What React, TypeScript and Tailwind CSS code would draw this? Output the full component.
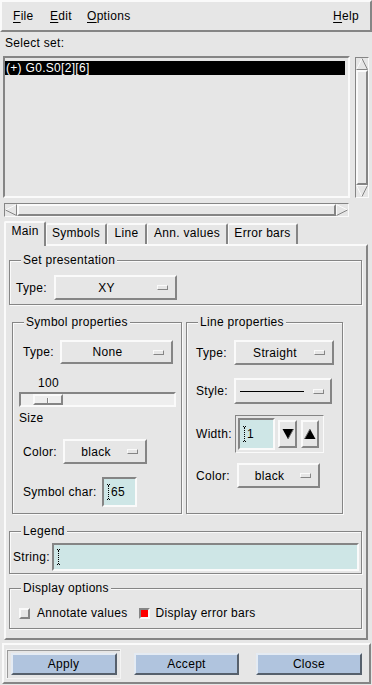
import React from "react";

const RAISED =
  "border-2 border-t-[#fafafa] border-l-[#fafafa] border-r-[#858585] border-b-[#858585]";
const RAISED1 =
  "border border-t-[#fafafa] border-l-[#fafafa] border-r-[#858585] border-b-[#858585]";
const SUNKEN =
  "border-2 border-t-[#858585] border-l-[#858585] border-r-[#fafafa] border-b-[#fafafa]";
const SUNKEN1 =
  "border border-t-[#858585] border-l-[#858585] border-r-[#fafafa] border-b-[#fafafa]";
const BTN =
  "border-2 border-t-[#e4ebf3] border-l-[#e4ebf3] border-r-[#56606c] border-b-[#56606c] bg-[#b0c4de] flex items-center justify-center shrink-0";

type P = { className?: string; children?: React.ReactNode };

function Frame({ title, className = "", children }: P & { title: string }) {
  return (
    <div
      className={`relative shrink-0 border border-[#858585] shadow-[inset_1px_1px_0_#fafafa,1px_1px_0_#fafafa] ${className}`}
    >
      <span className="absolute left-[11px] top-[-8px] bg-[#e6e6e6] px-[2px] leading-[14px] whitespace-nowrap">
        {title}
      </span>
      {children}
    </div>
  );
}

function Ind({ className = "" }: P) {
  return <div className={`w-[11px] h-[5px] shrink-0 ${RAISED1} ${className}`} />;
}

function OptMenu({ className = "", children }: P) {
  return (
    <div className={`${RAISED} flex items-center shrink-0 ${className}`}>
      <div className="flex-1 text-center leading-[14px] whitespace-nowrap">{children}</div>
      <Ind className="mr-[7px]" />
    </div>
  );
}

function Cursor() {
  const dots = [];
  for (let y = 2; y <= 13; y += 2) dots.push(<rect key={y} x="1" y={y} width="1" height="1" fill="#000" />);
  return (
    <svg width="3" height="16" viewBox="0 0 3 16" className="shrink-0">
      <rect x="0" y="0" width="1" height="1" fill="#000" />
      <rect x="2" y="0" width="1" height="1" fill="#000" />
      <rect x="1" y="1" width="1" height="1" fill="#000" />
      {dots}
      <rect x="1" y="14" width="1" height="1" fill="#000" />
      <rect x="0" y="15" width="1" height="1" fill="#000" />
      <rect x="2" y="15" width="1" height="1" fill="#000" />
    </svg>
  );
}

function Field({ className = "", text = "" }: P & { text?: string }) {
  return (
    <div className={`${SUNKEN} bg-[#cee6e6] flex items-center shrink-0 ${className}`}>
      <div className="ml-[3px] flex items-center">
        <Cursor />
        <span className="leading-[14px] ml-[1px]">{text}</span>
      </div>
    </div>
  );
}

type Dir = "up" | "down" | "left" | "right";
function Arrow({ dir }: { dir: Dir }) {
  const L = "#fafafa";
  const D = "#858585";
  const F = "#e6e6e6";
  let poly = "";
  let lines: [string, string][] = [];
  if (dir === "up") {
    poly = "6,0.5 11.5,11.5 0.5,11.5";
    lines = [["M0.5 11.5 L6 0.5", L], ["M6 0.5 L11.5 11.5", D], ["M0.5 11.5 L11.5 11.5", D]];
  } else if (dir === "down") {
    poly = "0.5,0.5 11.5,0.5 6,11.5";
    lines = [["M0.5 0.5 L11.5 0.5", L], ["M0.5 0.5 L6 11.5", L], ["M11.5 0.5 L6 11.5", D]];
  } else if (dir === "left") {
    poly = "0.5,6 11.5,0.5 11.5,11.5";
    lines = [["M0.5 6 L11.5 0.5", L], ["M11.5 0.5 L11.5 11.5", D], ["M11.5 11.5 L0.5 6", D]];
  } else {
    poly = "0.5,0.5 11.5,6 0.5,11.5";
    lines = [["M0.5 0.5 L0.5 11.5", L], ["M0.5 0.5 L11.5 6", L], ["M11.5 6 L0.5 11.5", D]];
  }
  return (
    <svg width="12" height="12" viewBox="0 0 12 12" className="shrink-0">
      <polygon points={poly} fill={F} />
      {lines.map(([d, c], i) => (
        <path key={i} d={d} stroke={c} strokeWidth="1" fill="none" />
      ))}
    </svg>
  );
}

function SpinArrow({ up }: { up?: boolean }) {
  return (
    <svg width="14" height="24" viewBox="0 0 14 24">
      {up ? (
        <>
          <polygon points="7,7 12.5,17 1.5,17" fill="#000" />
          <path d="M1.5 17 L7 7" stroke="#6a6a6a" strokeWidth="1" />
        </>
      ) : (
        <>
          <polygon points="1.5,7 12.5,7 7,17" fill="#000" />
          <path d="M12.5 7 L7 17" stroke="#6a6a6a" strokeWidth="1" />
        </>
      )}
    </svg>
  );
}

function Tab({ className = "", children }: P) {
  return (
    <div
      className={`h-[21px] shrink-0 border-l border-t-2 border-r-2 border-l-[#fafafa] border-t-[#fafafa] border-r-[#858585] rounded-t-[2px] bg-[#e6e6e6] text-center pt-[1px] whitespace-nowrap ${className}`}
    >
      {children}
    </div>
  );
}

export default function App() {
  return (
    <div className="w-[372px] h-[685px] bg-[#e6e6e6] text-black text-[12px] leading-[14px] tracking-[0.3px] overflow-hidden flex flex-col [font-family:'Liberation_Sans',Arial,sans-serif]">
      {/* Menu bar */}
      <div className={`h-[32px] shrink-0 ${RAISED} flex items-center`}>
        <div className="w-[37px] ml-[11px]">
          <span className="underline underline-offset-2">F</span>ile
        </div>
        <div className="w-[37px]">
          <span className="underline underline-offset-2">E</span>dit
        </div>
        <div>
          <span className="underline underline-offset-2">O</span>ptions
        </div>
        <div className="ml-auto mr-[11px]">
          <span className="underline underline-offset-2">H</span>elp
        </div>
      </div>

      <div className="mt-[4px] pl-[5px] h-[14px] shrink-0">Select set:</div>

      {/* list + vertical scrollbar */}
      <div className="mt-[6px] flex items-start h-[142px] shrink-0">
        <div className={`ml-[3px] w-[347px] h-[142px] ${SUNKEN}`}>
          <div className="mt-[3px] mr-[3px] h-[14px] bg-black text-white pl-[1px] whitespace-nowrap">
            (+) G0.S0[2][6]
          </div>
        </div>
        <div className={`ml-[5px] mt-[1px] w-[14px] h-[141px] ${SUNKEN1} flex flex-col items-center`}>
          <Arrow dir="up" />
          <div className={`w-[12px] h-[115px] ${RAISED}`} />
          <Arrow dir="down" />
        </div>
      </div>

      {/* horizontal scrollbar */}
      <div className={`mt-[5px] ml-[4px] w-[345px] h-[14px] shrink-0 ${SUNKEN1} flex items-center`}>
        <Arrow dir="left" />
        <div className={`w-[319px] h-[12px] ${RAISED}`} />
        <Arrow dir="right" />
      </div>

      {/* tabs */}
      <div className="mt-[4px] ml-[4px] flex items-end h-[23px] shrink-0 relative z-10">
        <div className="w-[42px] h-[25px] -mb-[2px] shrink-0 border-l-2 border-t-2 border-r-2 border-l-[#fafafa] border-t-[#fafafa] border-r-[#858585] rounded-t-[2px] bg-[#e6e6e6] text-center pt-[1px]">
          Main
        </div>
        <Tab className="w-[61px]">Symbols</Tab>
        <Tab className="w-[40px]">Line</Tab>
        <Tab className="w-[81px]">Ann. values</Tab>
        <Tab className="w-[70px]">Error bars</Tab>
      </div>

      {/* panel */}
      <div className={`ml-[4px] w-[364px] h-[396px] shrink-0 ${RAISED} flex flex-col`}>
        <Frame title="Set presentation" className="mt-[14px] ml-[3px] w-[353px] h-[45px]">
          <div className="mt-[14px] flex items-center pl-[6px] h-[25px]">
            <div className="w-[38px] shrink-0">Type:</div>
            <OptMenu className="w-[123px] h-[25px]">XY</OptMenu>
          </div>
        </Frame>

        <div className="mt-[17px] ml-[6px] flex shrink-0">
          <Frame title="Symbol properties" className="w-[170px] h-[192px]">
            <div className="flex flex-col">
              <div className="mt-[17px] flex items-center h-[24px] pl-[10px]">
                <div className="w-[37px] shrink-0">Type:</div>
                <OptMenu className="w-[113px] h-[24px]">None</OptMenu>
              </div>
              <div className="mt-[12px] h-[14px] pl-[25px]">100</div>
              <div className={`mt-[2px] ml-[6px] w-[157px] h-[15px] ${SUNKEN} bg-[#eeeeee] flex items-stretch`}>
                <div className={`ml-[12px] w-[30px] ${RAISED} flex items-center justify-center`}>
                  <div className="w-[1px] h-[5px] bg-[#858585] mt-[2px]" />
                  <div className="w-[1px] h-[5px] bg-[#fafafa] mt-[2px]" />
                </div>
              </div>
              <div className="mt-[4px] h-[14px] pl-[6px]">Size</div>
              <div className="mt-[14px] flex items-center h-[25px] pl-[10px]">
                <div className="w-[40px] shrink-0">Color:</div>
                <OptMenu className="w-[84px] h-[25px]">black</OptMenu>
              </div>
              <div className="mt-[13px] flex items-center h-[30px] pl-[10px]">
                <div className="w-[79px] shrink-0 whitespace-nowrap">Symbol char:</div>
                <Field className="w-[35px] h-[30px]" text="65" />
              </div>
            </div>
          </Frame>

          <Frame title="Line properties" className="ml-[4px] w-[157px] h-[192px]">
            <div className="flex flex-col">
              <div className="mt-[17px] flex items-center h-[25px] pl-[9px]">
                <div className="w-[38px] shrink-0">Type:</div>
                <OptMenu className="w-[100px] h-[25px]">Straight</OptMenu>
              </div>
              <div className="mt-[13px] flex items-center h-[26px] pl-[9px]">
                <div className="w-[38px] shrink-0">Style:</div>
                <div className={`${RAISED} w-[98px] h-[26px] flex items-center shrink-0`}>
                  <div className="ml-[4px] w-[64px] h-[1px] bg-black" />
                  <div className="flex-1" />
                  <Ind className="mr-[6px]" />
                </div>
              </div>
              <div className="mt-[11px] flex items-center h-[38px] pl-[9px]">
                <div className="w-[39px] shrink-0">Width:</div>
                <div className={`w-[89px] h-[38px] shrink-0 ${SUNKEN1} flex items-center pl-[2px]`}>
                  <Field className="w-[37px] h-[32px]" text="1" />
                  <div className={`ml-[3px] w-[19px] h-[28px] ${RAISED} flex items-center justify-center`}>
                    <SpinArrow />
                  </div>
                  <div className={`ml-[4px] w-[18px] h-[28px] ${RAISED} flex items-center justify-center`}>
                    <SpinArrow up />
                  </div>
                </div>
              </div>
              <div className="mt-[10px] flex items-center h-[25px] pl-[9px]">
                <div className="w-[41px] shrink-0">Color:</div>
                <OptMenu className="w-[83px] h-[25px]">black</OptMenu>
              </div>
            </div>
          </Frame>
        </div>

        <Frame title="Legend" className="mt-[17px] ml-[3px] w-[353px] h-[43px]">
          <div className="mt-[11px] flex items-center h-[28px] pl-[3px]">
            <div className="w-[39px] shrink-0">String:</div>
            <Field className="w-[307px] h-[28px]" />
          </div>
        </Frame>

        <Frame title="Display options" className="mt-[14px] ml-[3px] w-[353px] h-[41px]">
          <div className="mt-[17px] flex items-center h-[14px] pl-[9px]">
            <div className={`w-[11px] h-[11px] shrink-0 ${RAISED}`} />
            <div className="ml-[7px] whitespace-nowrap">Annotate values</div>
            <div className={`ml-[11px] w-[11px] h-[11px] shrink-0 ${SUNKEN} bg-[#ff0000]`} />
            <div className="ml-[6px] whitespace-nowrap">Display error bars</div>
          </div>
        </Frame>
      </div>

      {/* action area */}
      <div className={`mt-[3px] ml-[2px] w-[369px] h-[41px] shrink-0 ${RAISED}`}>
        <div className="mt-[4px] flex items-center h-[30px]">
          <div className="ml-[2px] w-[115px] h-[30px] shrink-0 border border-[#f4f4f4] shadow-[inset_1px_1px_0_#9a9a9a] flex items-center justify-center">
            <div className={`${BTN} w-[106px] h-[22px]`}>Apply</div>
          </div>
          <div className={`${BTN} ml-[13px] w-[105px] h-[22px]`}>Accept</div>
          <div className={`${BTN} ml-[17px] w-[106px] h-[22px]`}>Close</div>
        </div>
      </div>
    </div>
  );
}
